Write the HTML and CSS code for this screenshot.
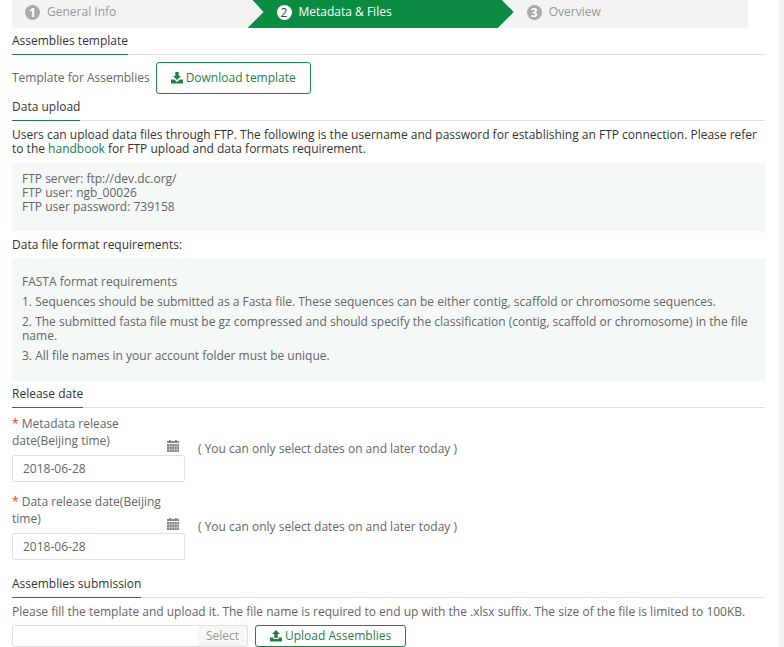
FILE: index.html
```html
<!DOCTYPE html>
<html lang="en">
<head>
    <meta charset="UTF-8">
    <meta name="viewport" content="width=device-width, initial-scale=1.0">
    <title>Assembly Submission</title>
    <link rel="stylesheet" href="styles.css">
</head>
<body>

    <main class="page">
        <ol class="steps">
            <li class="step"><span class="step-number">1</span>General Info</li>
            <li class="step active"><span class="step-number">2</span>Metadata &amp; Files</li>
            <li class="step"><span class="step-number">3</span>Overview</li>
        </ol>

        <h2><span>Assemblies template</span></h2>
        <div class="template-row">
            <span>Template for Assemblies</span>
            <button type="button" class="btn btn-large">
                <svg class="icon" viewBox="0 0 12 12"><path d="M4.3 0h3.4v4H10L6 8 2 4h2.300zM0 7.500h3.200L6 10l2.800-2.500H12V11.500H0z"/></svg>
                Download template
            </button>
        </div>

        <h2><span>Data upload</span></h2>
        <p class="intro">Users can upload data files through FTP. The following is the username and password for establishing an FTP connection. Please refer to the <a href="#">handbook</a> for FTP upload and data formats requirement.</p>
        <div class="info-box ftp-box">
            <p>FTP server: ftp://dev.dc.org/</p>
            <p>FTP user: ngb_00026</p>
            <p>FTP user password: 739158</p>
        </div>
        <p class="format-title">Data file format requirements:</p>
        <div class="info-box format-box">
            <p>FASTA format requirements</p>
            <p>1. Sequences should be submitted as a Fasta file. These sequences can be either contig, scaffold or chromosome sequences.</p>
            <p>2. The submitted fasta file must be gz compressed and should specify the classification (contig, scaffold or chromosome) in the file name.</p>
            <p>3. All file names in your account folder must be unique.</p>
        </div>

        <h2><span>Release date</span></h2>
        <div class="date-row">
            <div class="date-field">
                <div class="date-label">
                    <label for="metadata-date"><span class="required">*</span> Metadata release date(Beijing time)</label>
                    <svg class="calendar" viewBox="0 0 12 12"><path d="M0 1h2V0h2v1h4V0h2v1h2v2H0z"/><path d="M0 4h12v8H0z"/><path class="calendar-grid" d="M0 6.500h12M0 9.500h12M2.500 4v8M5 4v8M7.500 4v8M10 4v8"/></svg>
                </div>
                <input type="text" id="metadata-date" value="2018-06-28">
            </div>
            <span class="date-note">( You can only select dates on and later today )</span>
        </div>
        <div class="date-row">
            <div class="date-field">
                <div class="date-label">
                    <label for="data-date"><span class="required">*</span> Data release date(Beijing time)</label>
                    <svg class="calendar" viewBox="0 0 12 12"><path d="M0 1h2V0h2v1h4V0h2v1h2v2H0z"/><path d="M0 4h12v8H0z"/><path class="calendar-grid" d="M0 6.500h12M0 9.500h12M2.500 4v8M5 4v8M7.500 4v8M10 4v8"/></svg>
                </div>
                <input type="text" id="data-date" value="2018-06-28">
            </div>
            <span class="date-note">( You can only select dates on and later today )</span>
        </div>

        <h2><span>Assemblies submission</span></h2>
        <p class="upload-text">Please fill the template and upload it. The file name is required to end up with the .xlsx suffix. The size of the file is limited to 100KB.</p>
        <div class="upload-row">
            <div class="file-picker">
                <input type="text" aria-label="Selected file" readonly>
                <button type="button">Select</button>
            </div>
            <button type="button" class="btn">
                <svg class="icon" viewBox="0 0 12 12"><path d="M6 0l4 4H7.700v4H4.300V4H2zM0 7.500h3.300V9h5.400V7.500H12V11.500H0z"/></svg>
                Upload Assemblies
            </button>
        </div>
    </main>

</body>
</html>
```
FILE: styles.css
```css
* {
    margin: 0;
    padding: 0;
    box-sizing: border-box;
}

body {
    font-family: 'Open Sans', sans-serif;
    font-size: 12px;
    line-height: 14px;
    color: #666;
    background: #f3f3f3;
    padding-right: 5px;
}

input, button {
    font: inherit;
    color: inherit;
}

.page {
    background: #fff;
    min-height: 100vh;
    padding: 0 14px 0 12px;
}

/* Progress steps */
.steps {
    display: grid;
    grid-template-columns: 16fr 17fr 17fr;
    list-style: none;
    background: #f3f3f3;
    margin-right: 17px;
    height: 28px;
}

.step {
    display: flex;
    align-items: center;
    gap: 7px;
    padding: 0 0 4px 13px;
    color: #999;
}

.step.active {
    padding-left: 29px;
    margin-right: -16px;
    color: #fff;
    background: #0c8b43;
    clip-path: polygon(5px 0, calc(100% - 12px) 0, 100% 12px, calc(100% - 16px) 100%, 0 100%, 16px 12px);
}

.step:last-child {
    padding-left: 29px;
}

.step-number {
    width: 15px;
    height: 15px;
    border-radius: 50%;
    background: #aaa;
    color: #fff;
    font-weight: bold;
    line-height: 15px;
    text-align: center;
}

.active .step-number {
    background: #fff;
    color: #444;
    font-weight: normal;
}

/* Section titles */
h2 {
    display: flex;
    font-size: 12px;
    font-weight: normal;
    line-height: 26px;
    color: #333;
    border-bottom: 1px solid #e0e0e0;
}

h2 span {
    border-bottom: 1px solid #23794c;
    margin-bottom: -1px;
}

/* Buttons */
.btn {
    display: flex;
    align-items: center;
    justify-content: center;
    gap: 3px;
    height: 22px;
    padding: 0 14px;
    color: #1f8048;
    background: #fff;
    border: 1px solid #1f8048;
    border-radius: 3px;
    cursor: pointer;
}

.btn-large {
    height: 32px;
}

.icon {
    width: 12px;
    height: 12px;
    fill: currentColor;
}

.template-row {
    display: flex;
    align-items: center;
    gap: 6px;
    padding-top: 7px;
}

.intro {
    color: #333;
    margin: 7px 0;
}

a {
    color: #23794c;
    text-decoration: none;
}

.info-box {
    background: #f4f8f7;
    padding: 9px 10px;
}

.ftp-box {
    padding-bottom: 17px;
}

.format-title {
    color: #333;
    padding: 7px 0 6px;
}

.format-box {
    display: flex;
    flex-direction: column;
    gap: 6px;
    padding: 17px 10px 18px;
}

/* Release dates */
.date-row {
    display: flex;
    align-items: center;
    gap: 13px;
    padding-top: 7px;
    margin-bottom: 4px;
}

.date-row + h2 {
    margin-top: 11px;
}

.date-field {
    width: 173px;
}

.date-label {
    display: flex;
    justify-content: space-between;
    align-items: flex-end;
    gap: 4px;
    line-height: 17px;
    padding: 0 6px 6px 0;
}

.required {
    color: #e8401c;
}

.calendar {
    flex: none;
    width: 12px;
    height: 12px;
    margin-bottom: -3px;
    fill: #888;
}

.calendar-grid {
    stroke: #ddd;
    stroke-width: 0.5;
}

.date-field input {
    display: block;
    width: 100%;
    height: 27px;
    padding: 0 10px;
    border: 1px solid #e0e0e0;
    border-radius: 2px;
}

/* File upload */
.upload-text {
    padding: 7px 0 6px;
}

.upload-row {
    display: flex;
    gap: 7px;
}

.file-picker {
    display: flex;
    width: 236px;
    height: 22px;
    border: 1px solid #e0e0e0;
    border-radius: 2px;
}

.file-picker input {
    flex: 1;
    min-width: 0;
    padding: 0 6px;
    border: none;
}

.file-picker button {
    padding: 0 8px;
    color: #999;
    background: #f7f7f7;
    border: none;
}
```
